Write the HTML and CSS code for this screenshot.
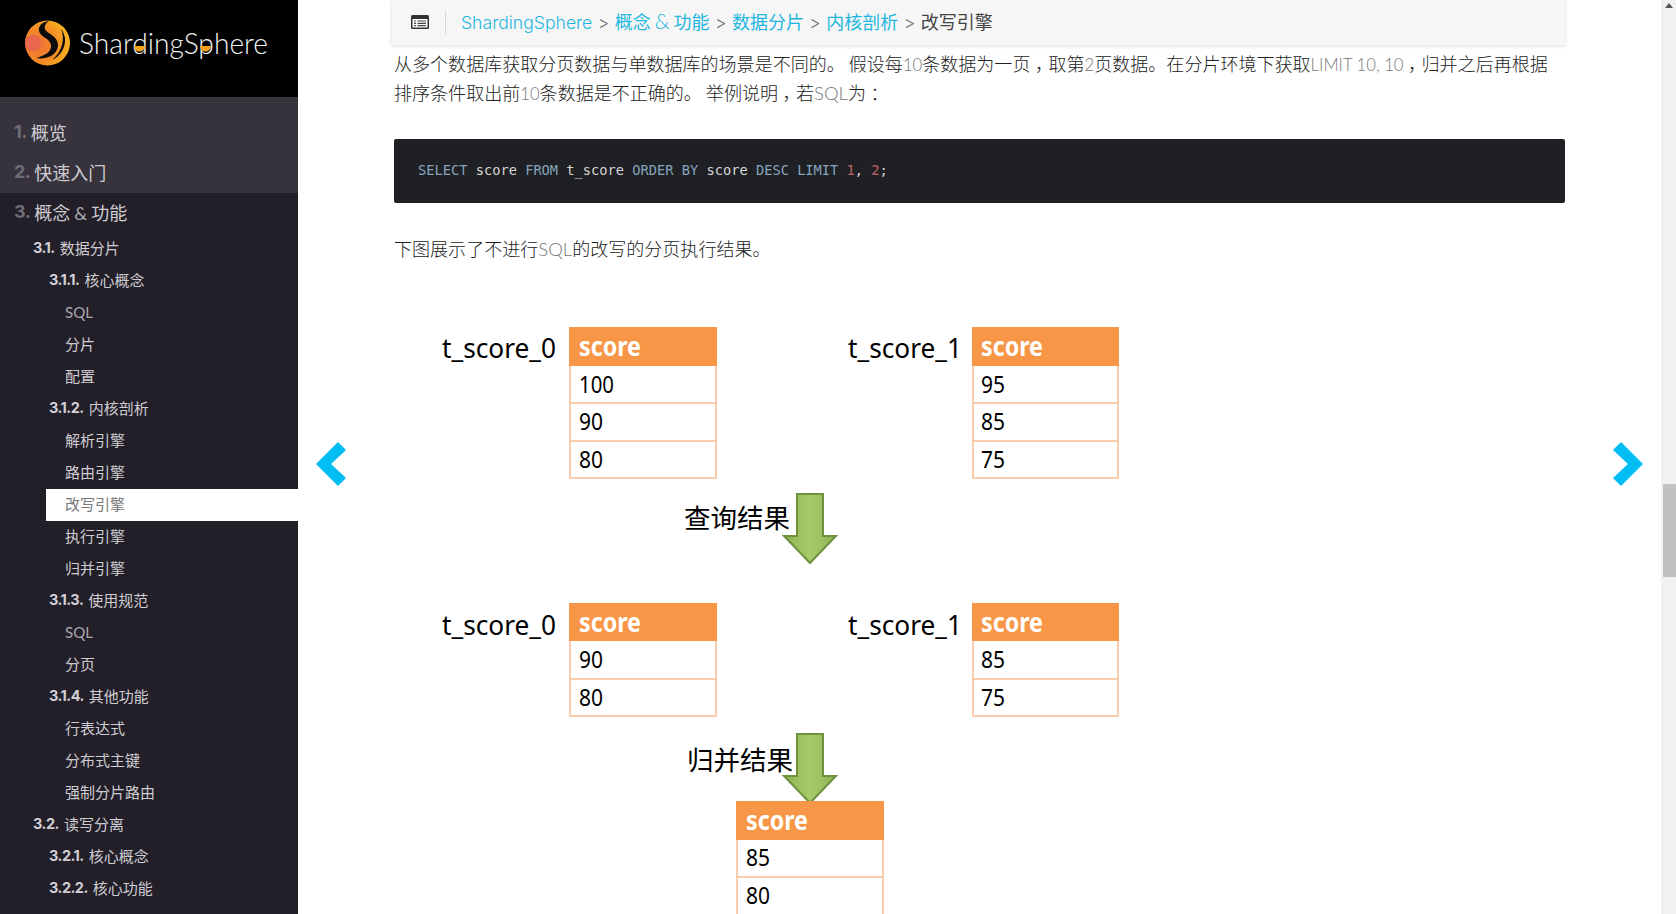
FILE: index.html
```html
<!DOCTYPE html>
<html lang="zh">
<head>
<meta charset="utf-8">
<title>改写引擎 :: ShardingSphere</title>
<link rel="stylesheet" href="styles.css">
</head>
<body>
<div class="page">
  <aside class="sidebar">
    <header class="brand">
      <svg class="logo" viewBox="0 0 298 97" width="298" height="97">
        <defs>
          <radialGradient id="ball" cx="30%" cy="55%" r="75%">
            <stop offset="0" stop-color="#f0703a"/><stop offset=".5" stop-color="#f48a26"/><stop offset="1" stop-color="#f9b81e"/>
          </radialGradient>
        </defs>
        <circle cx="47.500" cy="43" r="22.500" fill="url(#ball)"/>
        <circle cx="33" cy="43" r="8" fill="#e9674e"/>
        <path d="M49 21C42 22 38 26 39 31 40 37 50 38 51 45 52 52 44 56 36 58 46 60 58 55 58 45 58 36 46 33 45 29 44 26 46 23 49 21Z" fill="#0d0d0d"/>
        <path d="M61 29C65 38 63 51 52 60 60 57 66 47 65 38 64 34 63 31 61 29Z" fill="#0d0d0d"/>
        <text class="logo-text" x="79" y="54" textLength="189" lengthAdjust="spacingAndGlyphs">ShardingSphere</text>
        <path d="M134 46h11a5.500 5.500 0 0 1-11 0z" fill="#f5a11e"/>
        <path d="M200 46h11a5.500 5.500 0 0 1-11 0z" fill="#f5a11e"/>
      </svg>
    </header>
    <nav class="toc-top">
      <a class="l1"><b>1.</b> 概览</a>
      <a class="l1"><b>2.</b> 快速入门</a>
    </nav>
    <nav class="toc">
      <a class="l1"><b>3.</b> <span>概念 <i>&amp;</i> 功能</span></a>
      <a class="l2"><b>3.1.</b> 数据分片</a>
      <a class="l3"><b>3.1.1.</b> 核心概念</a>
      <a class="l4"><i>SQL</i></a>
      <a class="l4">分片</a>
      <a class="l4">配置</a>
      <a class="l3"><b>3.1.2.</b> 内核剖析</a>
      <a class="l4">解析引擎</a>
      <a class="l4">路由引擎</a>
      <a class="l4 active">改写引擎</a>
      <a class="l4">执行引擎</a>
      <a class="l4">归并引擎</a>
      <a class="l3"><b>3.1.3.</b> 使用规范</a>
      <a class="l4"><i>SQL</i></a>
      <a class="l4">分页</a>
      <a class="l3"><b>3.1.4.</b> 其他功能</a>
      <a class="l4">行表达式</a>
      <a class="l4">分布式主键</a>
      <a class="l4">强制分片路由</a>
      <a class="l2"><b>3.2.</b> 读写分离</a>
      <a class="l3"><b>3.2.1.</b> 核心概念</a>
      <a class="l3"><b>3.2.2.</b> 核心功能</a>
    </nav>
  </aside>

  <main class="main">
    <div class="crumbs">
      <svg class="menu-icon" viewBox="0 0 18 14" width="18" height="14">
        <rect width="18" height="14" rx="1.500" fill="#333"/>
        <rect x="1.500" y="4" width="15" height="8.500" fill="#fff"/>
        <path d="M3 6h2M6.500 6H15M3 8.300h2M6.500 8.300H15M3 10.600h2M6.500 10.600H15" stroke="#444" stroke-width="1.200"/>
      </svg>
      <span class="crumb-text"><a>ShardingSphere</a> <em>&gt;</em> <a class="cjk">概念 <i>&amp;</i> 功能</a> <em>&gt;</em> <a class="cjk">数据分片</a> <em>&gt;</em> <a class="cjk">内核剖析</a> <em>&gt;</em> <span class="here">改写引擎</span></span>
    </div>
    <p class="para lead">从多个数据库获取分页数据与单数据库的场景是不同的。 假设每<i>10</i>条数据为一页<span class="fw">，</span>取第<i>2</i>页数据。在分片环境下获取<i>LIMIT 10, 10</i><span class="fw">，</span>归并之后再根据<br>排序条件取出前<i>10</i>条数据是不正确的。 举例说明<span class="fw">，</span>若<i class="wide">SQL</i>为<span class="fw">：</span></p>
    <pre class="code"><code><span class="kw">SELECT</span> score <span class="kw">FROM</span> t_score <span class="kw">ORDER BY</span> score <span class="kw">DESC</span> <span class="kw">LIMIT</span> <span class="num">1</span>, <span class="num">2</span>;</code></pre>
    <p class="para after">下图展示了不进行<i class="wide">SQL</i>的改写的分页执行结果。</p>
    <svg class="diagram" viewBox="394 264 1172 650" width="1172" height="650">
      <defs>
        <linearGradient id="shaft" x1="0" x2="1" y1="0" y2="0">
          <stop offset="0" stop-color="#8fb352"/><stop offset=".5" stop-color="#a8c96a"/><stop offset="1" stop-color="#8fb352"/>
        </linearGradient>
        <g id="arrow">
          <path d="M-13 0H13V42H26L0 69-26 42H-13Z" fill="url(#shaft)" stroke="#6f9140" stroke-width="2"/>
        </g>
      </defs>

      <text class="tname" x="442" y="358" textLength="114" lengthAdjust="spacingAndGlyphs">t_score_0</text>
      <rect class="frame" x="570" y="328" width="146" height="150"/>
      <rect class="head" x="569" y="327" width="148" height="39"/>
      <path class="rule" d="M570 403H716M570 441H716"/>
      <text class="hd" x="579" y="356" textLength="62" lengthAdjust="spacingAndGlyphs">score</text>
      <text class="val" x="579" y="393" textLength="35" lengthAdjust="spacingAndGlyphs">100</text>
      <text class="val" x="579" y="430" textLength="24" lengthAdjust="spacingAndGlyphs">90</text>
      <text class="val" x="579" y="468" textLength="24" lengthAdjust="spacingAndGlyphs">80</text>

      <text class="tname" x="848" y="358" textLength="114" lengthAdjust="spacingAndGlyphs">t_score_1</text>
      <rect class="frame" x="973" y="328" width="145" height="150"/>
      <rect class="head" x="972" y="327" width="147" height="39"/>
      <path class="rule" d="M973 403H1118M973 441H1118"/>
      <text class="hd" x="981" y="356" textLength="62" lengthAdjust="spacingAndGlyphs">score</text>
      <text class="val" x="981" y="393" textLength="24" lengthAdjust="spacingAndGlyphs">95</text>
      <text class="val" x="981" y="430" textLength="24" lengthAdjust="spacingAndGlyphs">85</text>
      <text class="val" x="981" y="468" textLength="24" lengthAdjust="spacingAndGlyphs">75</text>

      <text class="cap" x="684" y="528">查询结果</text>
      <use href="#arrow" x="810" y="494"/>

      <text class="tname" x="442" y="635" textLength="114" lengthAdjust="spacingAndGlyphs">t_score_0</text>
      <rect class="frame" x="570" y="604" width="146" height="112"/>
      <rect class="head" x="569" y="603" width="148" height="38"/>
      <path class="rule" d="M570 679H716"/>
      <text class="hd" x="579" y="632" textLength="62" lengthAdjust="spacingAndGlyphs">score</text>
      <text class="val" x="579" y="668" textLength="24" lengthAdjust="spacingAndGlyphs">90</text>
      <text class="val" x="579" y="706" textLength="24" lengthAdjust="spacingAndGlyphs">80</text>

      <text class="tname" x="848" y="635" textLength="114" lengthAdjust="spacingAndGlyphs">t_score_1</text>
      <rect class="frame" x="973" y="604" width="145" height="112"/>
      <rect class="head" x="972" y="603" width="147" height="38"/>
      <path class="rule" d="M973 679H1118"/>
      <text class="hd" x="981" y="632" textLength="62" lengthAdjust="spacingAndGlyphs">score</text>
      <text class="val" x="981" y="668" textLength="24" lengthAdjust="spacingAndGlyphs">85</text>
      <text class="val" x="981" y="706" textLength="24" lengthAdjust="spacingAndGlyphs">75</text>

      <text class="cap" x="687" y="770">归并结果</text>
      <use href="#arrow" x="810" y="734"/>

      <rect class="frame" x="737" y="802" width="146" height="130"/>
      <rect class="head" x="736" y="801" width="148" height="39"/>
      <path class="rule" d="M737 877H883"/>
      <text class="hd" x="746" y="830" textLength="62" lengthAdjust="spacingAndGlyphs">score</text>
      <text class="val" x="746" y="866" textLength="24" lengthAdjust="spacingAndGlyphs">85</text>
      <text class="val" x="746" y="904" textLength="24" lengthAdjust="spacingAndGlyphs">80</text>
    </svg>
    <a class="nav-arrow prev" aria-label="上一页">
      <svg viewBox="0 0 30 46" width="30" height="46"><path d="M22 2 29 9 14 23 29 37 22 44 1 23Z" fill="#00bdf3" stroke="#00bdf3" stroke-width="1.500" stroke-linejoin="round"/></svg>
    </a>
    <a class="nav-arrow next" aria-label="下一页">
      <svg viewBox="0 0 30 46" width="30" height="46"><path d="M8 2 1 9 16 23 1 37 8 44 29 23Z" fill="#00bdf3" stroke="#00bdf3" stroke-width="1.500" stroke-linejoin="round"/></svg>
    </a>
  </main>

  <div class="scrollbar">
    <span class="sb-up"></span>
    <span class="sb-thumb"></span>
  </div>
</div>
</body>
</html>
```

FILE: styles.css
```css
* { box-sizing: border-box; }
html, body { margin: 0; height: 100%; overflow: hidden; background: #fff; }
body { font-family: "Lato", "Noto Sans CJK SC", sans-serif; }

.page { display: flex; width: 1676px; height: 914px; overflow: hidden; }

/* Sidebar */
.sidebar { flex: 0 0 298px; background: #231f29; color: #cfcdd2; font-family: "Noto Sans CJK SC", sans-serif; }
.brand { height: 97px; background: #000; }
.logo { display: block; }
.logo-text { font-family: "Lato", sans-serif; font-weight: 300; font-size: 29px; fill: #f2f2f2; }
.toc-top { background: #36333d; padding-top: 16px; }
.sidebar a { display: flex; align-items: center; white-space: nowrap; padding-bottom: 3px; }
.sidebar b { font-family: "Inter", sans-serif; font-weight: 700; letter-spacing: -0.5px; }
.sidebar i { font-family: "Lato", sans-serif; font-style: normal; font-weight: 400; }
.l1 { height: 40px; padding-left: 14px; font-size: 18px; font-weight: 400; gap: 4px; }
.l1 b { color: #6f6c78; font-size: 18px; font-weight: 700; }
.l1 i { color: #a9a7ae; }
.sidebar .l2, .sidebar .l3, .sidebar .l4 { height: 32px; padding-bottom: 4px; font-size: 15px; font-weight: 400; gap: 5px; }
.l2 b, .l3 b { font-size: 14.500px; color: #d2d0d5; }
.sidebar .l2 { padding-left: 33px; }
.sidebar .l3 { padding-left: 49px; }
.sidebar .l4 { padding-left: 65px; }
.l4 i { margin-top: 2px; font-size: 15px; color: #a9a7ae; }
.sidebar a.l4.active { margin-left: 46px; padding-left: 19px; background: #fff; color: #777; }

/* Main column */
.main { flex: 1 1 0; min-width: 0; padding: 0 96px; position: relative; color: #3a3a3a; }
.crumbs { display: flex; align-items: center; height: 45px; margin-left: -2px; padding: 0 0 2px 19px; background: #f6f6f6; box-shadow: 0 1px 4px rgba(0,0,0,.16); }
.menu-icon { flex: none; }
.crumb-text { margin-left: 16px; padding-left: 15px; border-left: 1px solid #d8d8d8; line-height: 23px; font-family: "Inter", sans-serif; font-size: 17.600px; font-weight: 300; white-space: pre; }
.crumb-text a { color: #1fb6e0; }
.crumb-text a.cjk { font-family: "Noto Sans CJK SC", sans-serif; font-size: 18px; font-weight: 400; }
.crumb-text a i { font-family: "Lato", sans-serif; font-size: 21px; font-style: normal; font-weight: 300; line-height: 1; }
.crumb-text em { margin: 0 .5px; font-style: normal; color: #666; }
.here { font-family: "Noto Sans CJK SC", sans-serif; font-size: 18px; font-weight: 400; color: #444; }

.para { margin: 0; font-family: "Noto Sans CJK SC", sans-serif; font-size: 18.050px; font-weight: 300; line-height: 28.500px; color: #222; white-space: nowrap; }
.para i { font-family: "Lato", sans-serif; font-size: 16.700px; font-style: normal; font-weight: 300; color: #777; line-height: 1; }
.para i.wide { font-size: 18.500px; }
.fw { display: inline-block; padding: 0 .25em; line-height: 1; font-feature-settings: "halt"; }
.lead { margin-top: 4px; }
.after { margin-top: 31px; }
.code { height: 64px; margin: 33px 0 0; padding: 0 24px; background: #1f2023; border-radius: 2px; font-family: "Liberation Mono", monospace; font-size: 13.700px; line-height: 62px; color: #d5d5d5; }
.kw { color: #86a3bd; }
.num { color: #c0626a; }

/* Figure */
.diagram { display: block; margin-top: 1px; font-family: "Noto Sans", "Noto Sans CJK SC", sans-serif; }
.frame { fill: #fff; stroke: #f8bd92; stroke-width: 1.500; }
.head { fill: #f79646; }
.rule { stroke: #f8bd92; stroke-width: 1.500; fill: none; }
.hd { font-size: 26px; font-weight: 700; fill: #fff; }
.val { font-size: 24px; fill: #000; }
.tname { font-size: 28px; fill: #000; }
.cap { font-family: "Noto Sans CJK SC", sans-serif; font-size: 26.500px; fill: #000; }

/* Page arrows */
.nav-arrow { position: absolute; top: 441px; display: block; height: 46px; }
.nav-arrow svg { display: block; }
.prev { left: 18px; }
.next { right: 18px; }

/* Scrollbar */
.scrollbar { flex: 0 0 15px; display: flex; flex-direction: column; align-items: flex-end; background: #f1f1f1; }
.sb-up { width: 0; height: 0; margin: 3px 3px 0 0; border: 4px solid transparent; border-top: 0; border-bottom: 5px solid #555; }
.sb-thumb { width: 13px; height: 93px; margin-top: 476px; background: #c1c1c1; }
```
